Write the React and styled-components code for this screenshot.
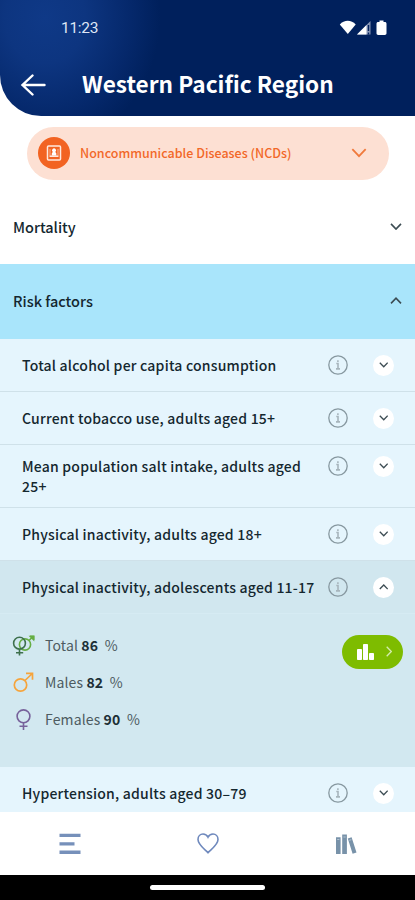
import React, { useState } from 'react';
import styled, { createGlobalStyle } from 'styled-components';

const GlobalStyle = createGlobalStyle`
  * {
    box-sizing: border-box;
  }

  body {
    margin: 0;
    background: #fff;
    font-family: 'Noto Sans CJK SC', 'Noto Sans', sans-serif;
    color: #14272f;
  }

  button {
    border: none;
    padding: 0;
    background: none;
    font: inherit;
    color: inherit;
    cursor: pointer;
  }

  svg {
    display: block;
    flex: none;
  }
`;

const Screen = styled.div`
  display: flex;
  flex-direction: column;
  width: 100%;
  height: 900px;
  overflow: hidden;
  background: #fff;
`;

const Header = styled.header`
  flex: none;
  height: 115.5px;
  border-bottom-left-radius: 41px;
  background: radial-gradient(ellipse 115px 130px at 45px 18px, #0f3987 0%, #0d3580 35%, #05286b 75%, #00205c 100%);
  color: #fff;
`;

const StatusBar = styled.div`
  display: flex;
  align-items: center;
  justify-content: space-between;
  height: 56px;
  padding: 0 27px 0 61px;
`;

const Clock = styled.span`
  font-family: Roboto, sans-serif;
  font-size: 15.5px;
  line-height: 20px;
  letter-spacing: -0.3px;
  color: #dfe6f5;
`;

const TitleBar = styled.div`
  display: flex;
  align-items: center;
  height: 58px;
  padding-left: 20px;
`;

const Title = styled.h1`
  margin: -2px 0 0 35px;
  font-size: 22.6px;
  line-height: 30px;
  font-weight: 700;
  white-space: nowrap;
`;

const TopicPicker = styled.button`
  flex: none;
  display: flex;
  align-items: center;
  height: 53px;
  margin: 11px 26px 0 27px;
  padding: 0 22px 0 11px;
  border-radius: 27px;
  background: #fde0d3;
  color: #f26829;
`;

const TopicIcon = styled.span`
  display: flex;
  align-items: center;
  justify-content: center;
  width: 32px;
  height: 32px;
  border-radius: 50%;
  background: #f26322;
`;

const TopicName = styled.span`
  flex: 1;
  margin-left: 10px;
  text-align: left;
  font-size: 12.5px;
  line-height: 20px;
  font-weight: 500;
  white-space: nowrap;
`;

const SectionRow = styled.button`
  flex: none;
  display: flex;
  align-items: center;
  justify-content: space-between;
  height: ${({ $open }) => ($open ? 75 : 74)}px;
  margin-top: ${({ $open }) => ($open ? 0 : 10)}px;
  padding: 0 13px;
  background: ${({ $open }) => ($open ? '#a9e5fb' : '#fff')};
  font-size: 14.5px;
  font-weight: 500;
  line-height: 20px;
`;

const List = styled.div`
  flex: 1;
  min-height: 0;
  overflow: hidden;
  background: #e5f5fd;
`;

const IndicatorRow = styled.div`
  display: flex;
  align-items: flex-start;
  height: ${({ $tall }) => ($tall ? 63 : 53)}px;
  padding: ${({ $tall }) => ($tall ? 11 : 16)}px 21px 0 22px;
  border-bottom: 1px solid ${({ $open }) => ($open ? '#d6ebf3' : '#cfe1e9')};
  background: ${({ $open }) => ($open ? '#d1e7ef' : '#e5f5fd')};
`;

const IndicatorName = styled.span`
  width: 306px;
  padding-right: ${({ $open }) => ($open ? 0 : 10)}px;
  font-size: 14px;
  line-height: 20px;
  font-weight: 500;
  letter-spacing: 0.21px;
`;

const Toggle = styled.button`
  display: flex;
  align-items: center;
  justify-content: center;
  width: 21px;
  height: 21px;
  margin-left: 25px;
  border-radius: 50%;
  background: #fff;
`;

const Details = styled.div`
  display: flex;
  justify-content: space-between;
  align-items: flex-start;
  height: 153px;
  padding: 13px 12px 0;
  background: #d2e8f0;
`;

const Stat = styled.div`
  display: flex;
  align-items: center;
  height: 37px;
  font-size: 14px;
  line-height: 20px;
  letter-spacing: 0.13px;
  color: #4d5b61;
  white-space: pre;

  b {
    font-weight: 700;
    color: #1d2f36;
  }
`;

const StatIcon = styled.span`
  display: flex;
  justify-content: center;
  width: 23px;
  margin-right: 10px;
`;

const ChartButton = styled.button`
  display: flex;
  align-items: center;
  justify-content: center;
  gap: 12px;
  width: 61px;
  height: 34px;
  margin-top: 8px;
  border-radius: 17px;
  background: #7ebc00;
  padding-left: 3px;
`;

const TabBar = styled.nav`
  flex: none;
  display: grid;
  grid-template-columns: repeat(3, 1fr);
  height: 63px;
  padding-left: 1px;
  background: #fff;
`;

const Tab = styled.button`
  display: flex;
  align-items: center;
  justify-content: center;
`;

const SystemBar = styled.div`
  flex: none;
  display: flex;
  align-items: center;
  justify-content: center;
  height: 25px;
  background: #000;
`;

const HomeHandle = styled.div`
  width: 115px;
  height: 5px;
  border-radius: 3px;
  background: #fff;
`;

const Chevron = ({ up, width = 12, color = '#3c4c53', stroke = 1.6 }) => (
  <svg width={width} height={width * 0.6} viewBox="0 0 12 7.2" fill="none">
    <path
      d={up ? 'M1 6.4 6 1.2l5 5.2' : 'M1 .9l5 5.2L11 .9'}
      stroke={color}
      strokeWidth={(stroke * 12) / width}
    />
  </svg>
);

const StatusIcons = () => (
  <svg width="49" height="16" viewBox="0 0 49 16">
    <path d="M.8 4.4C5.2-.5 12.3-.5 16.7 4.4L8.8 14z" fill="#fff" />
    <path d="M18 14.5 31.5 1v13.5z" fill="#8795b5" />
    <path d="M18 14.5 27.5 5v9.5z" fill="#fff" />
    <path d="M29.5 5v6M29.5 12.5v2" stroke="#00205c" strokeWidth="1.4" />
    <path d="M40.5.5h4V2h1.300c1 0 1.700.7 1.700 1.700v9.600c0 1-.7 1.700-1.700 1.700h-6.600c-1 0-1.700-.7-1.700-1.700V3.700C37.500 2.700 38.200 2 39.200 2h1.300z" fill="#fff" />
  </svg>
);

const BackArrow = () => (
  <svg width="27" height="22" viewBox="0 0 27 22" fill="none" stroke="#fff" strokeWidth="2.4" strokeLinecap="round">
    <path d="M12.500 1.500 2.500 11l10 9.500M2.500 11h22" />
  </svg>
);

const ScaleIcon = () => (
  <svg width="16" height="16" viewBox="0 0 16 16" fill="none" stroke="#ffe9de">
    <rect x="1.500" y="1" width="13" height="14" rx="1" strokeWidth="1.500" />
    <path d="M4 4v6.500M12 4v6.500" strokeWidth="1" opacity=".6" />
    <path d="M3.500 11.200h9" strokeWidth="1.600" />
    <path d="M5.800 10.500V8.200l1-1.200a2 2 0 1 1 2.500 0l1 1.200v2.300z" fill="#fff" stroke="none" />
  </svg>
);

const InfoIcon = () => (
  <svg width="20" height="20" viewBox="0 0 20 20" fill="none" stroke="#8798a0">
    <circle cx="10" cy="10" r="9.200" strokeWidth="1.300" />
    <path d="M8.300 8.500H10v5M8 13.900h4M9.900 5.200v1.800" strokeWidth="1.600" stroke="#a7b5bc" />
  </svg>
);

const BothIcon = () => (
  <svg width="23" height="21" viewBox="0 0 23 21" fill="none" strokeWidth="1.600">
    <g stroke="#65ae43">
      <circle cx="13" cy="9.500" r="5.600" />
      <path d="m17 5.500 4-4M18 1.300h3.700V5" />
      <path d="M18.500 1.500h3v3z" fill="#65ae43" />
    </g>
    <g stroke="#3e704d">
      <circle cx="7.500" cy="8.200" r="5.900" />
      <path d="M7.500 14v6.500M4 17.800h7.200" />
    </g>
  </svg>
);

const MaleIcon = () => (
  <svg width="21" height="21" viewBox="0 0 21 21" fill="none" stroke="#f6a43c" strokeWidth="1.700">
    <circle cx="7.500" cy="13" r="6.200" />
    <path d="M12 8.500 19.300 1.500M13 1.300h6.500v6.500" />
  </svg>
);

const FemaleIcon = () => (
  <svg width="17" height="21" viewBox="0 0 17 21" fill="none" stroke="#77629b" strokeWidth="1.600">
    <circle cx="8.500" cy="7.300" r="6.400" />
    <path d="M8.500 13.700V21M4.500 17.300h8" />
  </svg>
);

const BarsIcon = () => (
  <svg width="17" height="16" viewBox="0 0 17 16" fill="#fff">
    <rect x="0" y="5" width="5" height="11" rx=".8" />
    <rect x="6" y="0" width="5" height="16" rx=".8" />
    <rect x="12" y="9" width="5" height="7" rx=".8" />
  </svg>
);

const MenuIcon = () => (
  <svg width="22" height="22" viewBox="0 0 22 22" fill="#7690ba">
    <path d="M.500.700h21v3.400H.500zM.500 9.200h15v3.200H.500zM.500 17.500h21v3.400H.500z" />
  </svg>
);

const HeartIcon = () => (
  <svg width="22" height="21" viewBox="0 0 22 21" fill="none" stroke="#6f89bd" strokeWidth="1.600">
    <path d="M11 19.700C8 16.400 1 11.600 1 6.400 1 3.100 3.300 1 6 1c2.300 0 4 1.200 5 3.200C12 2.200 13.700 1 16 1c2.700 0 5 2.100 5 5.400 0 5.200-7 10-10 13.300z" />
  </svg>
);

const BooksIcon = () => (
  <svg width="22" height="20" viewBox="0 0 22 20" fill="#7892a9">
    <path d="M1 3.200h4.600V20H1zM7.200.500h4.700V20H7.200zM12.800 4.400l3.800-1.200L21.500 18.500l-3.900 1.300z" />
    <path d="M2.200 5.500h2.200M8.400 3h2.300M14.300 6.300l2-.6" stroke="#b3c3d1" />
  </svg>
);

const stats = [
  { label: 'Total', value: 86, Icon: BothIcon },
  { label: 'Males', value: 82, Icon: MaleIcon },
  { label: 'Females', value: 90, Icon: FemaleIcon },
];

const indicators = [
  { name: 'Total alcohol per capita consumption' },
  { name: 'Current tobacco use, adults aged 15+' },
  { name: 'Mean population salt intake, adults aged 25+', tall: true },
  { name: 'Physical inactivity, adults aged 18+' },
  { name: 'Physical inactivity, adolescents aged 11-17', stats },
  { name: 'Hypertension, adults aged 30–79' },
];

const App = () => {
  const [openIndex, setOpenIndex] = useState(4);

  return (
    <Screen>
      <GlobalStyle />
      <Header>
        <StatusBar>
          <Clock>11:23</Clock>
          <StatusIcons />
        </StatusBar>
        <TitleBar>
          <BackArrow />
          <Title>Western Pacific Region</Title>
        </TitleBar>
      </Header>

      <TopicPicker>
        <TopicIcon>
          <ScaleIcon />
        </TopicIcon>
        <TopicName>Noncommunicable Diseases (NCDs)</TopicName>
        <Chevron width={16} color="#f07a3c" stroke={1.8} />
      </TopicPicker>

      <SectionRow>
        Mortality
        <Chevron />
      </SectionRow>
      <SectionRow $open>
        Risk factors
        <Chevron up />
      </SectionRow>

      <List>
        {indicators.map((item, index) => {
          const open = index === openIndex;
          return (
            <React.Fragment key={item.name}>
              <IndicatorRow $open={open} $tall={item.tall}>
                <IndicatorName $open={open}>{item.name}</IndicatorName>
                <InfoIcon />
                <Toggle onClick={() => setOpenIndex(open ? -1 : index)}>
                  <Chevron up={open} width={9.5} stroke={1.3} />
                </Toggle>
              </IndicatorRow>
              {open && item.stats && (
                <Details>
                  <div>
                    {item.stats.map(({ label, value, Icon }) => (
                      <Stat key={label}>
                        <StatIcon>
                          <Icon />
                        </StatIcon>
                        <span>
                          {label} <b>{value}</b>{'  %'}
                        </span>
                      </Stat>
                    ))}
                  </div>
                  <ChartButton>
                    <BarsIcon />
                    <svg width="6" height="11" viewBox="0 0 6 11" fill="none" stroke="#d4ecac" strokeWidth="1.300">
                      <path d="m.7.700 4.600 4.800L.7 10.300" />
                    </svg>
                  </ChartButton>
                </Details>
              )}
            </React.Fragment>
          );
        })}
      </List>

      <TabBar>
        <Tab>
          <MenuIcon />
        </Tab>
        <Tab>
          <HeartIcon />
        </Tab>
        <Tab>
          <BooksIcon />
        </Tab>
      </TabBar>
      <SystemBar>
        <HomeHandle />
      </SystemBar>
    </Screen>
  );
};

export default App;
